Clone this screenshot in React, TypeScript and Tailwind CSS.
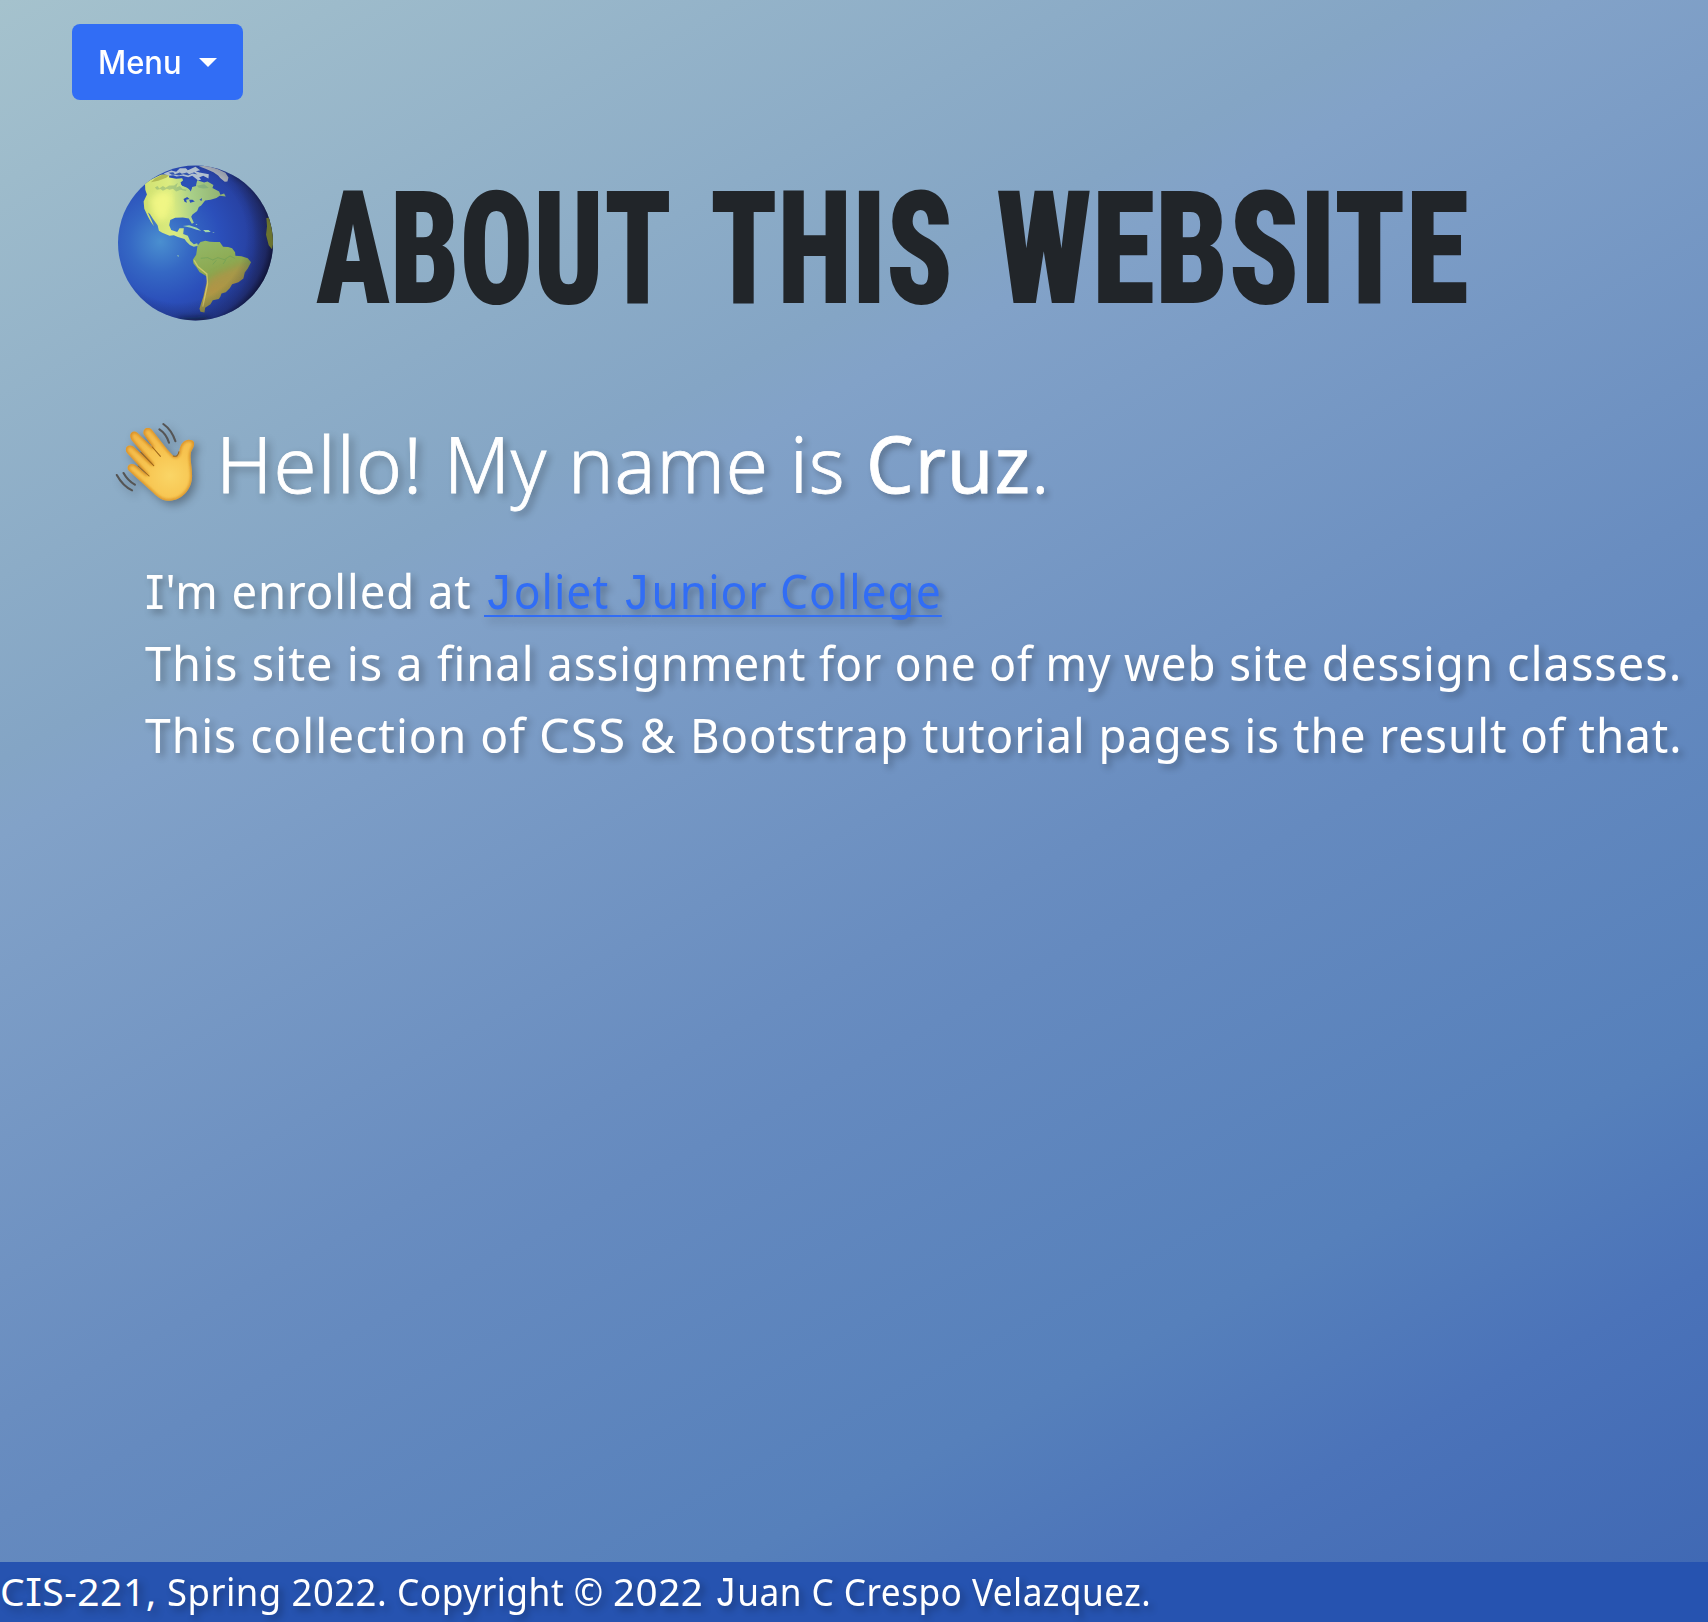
import { useLayoutEffect, useRef, useState, type ReactNode } from "react";

/** Squeezes or stretches one run of text horizontally to a fixed width. */
function Fit({ width, className = "", inner = "", children }: { width: number; className?: string; inner?: string; children: ReactNode }) {
  const ref = useRef<HTMLSpanElement>(null);
  const [scale, setScale] = useState(1);
  useLayoutEffect(() => {
    if (ref.current) setScale(width / ref.current.offsetWidth);
  }, [width]);
  return (
    <span className={`block shrink-0 whitespace-pre ${className}`} style={{ width }}>
      <span ref={ref} className={`inline-block origin-left ${inner}`} style={{ transform: `scaleX(${scale})` }}>
        {children}
      </span>
    </span>
  );
}

/** Capital I with serifs. */
function SerifI() {
  return <span className="font-['Inter'] text-[0.97em] leading-none [font-feature-settings:'cv08'_1,'ss02'_1]">I</span>;
}

/** Capital J with a bar on its left. */
function BarJ() {
  return <span className="font-['Liberation_Mono'] text-[1.08em] leading-none">J</span>;
}

function Globe() {
  return (
    <svg viewBox="50 42 472 474" className="h-[158px] w-[157px] shrink-0" aria-label="globe">
      <defs>
        <radialGradient id="sea" gradientUnits="userSpaceOnUse" cx="180" cy="275" r="330">
          <stop offset="0" stopColor="#4a8fd0" />
          <stop offset="0.28" stopColor="#3568c4" />
          <stop offset="0.55" stopColor="#2b4fba" />
          <stop offset="0.85" stopColor="#2740a0" />
          <stop offset="1" stopColor="#222c66" />
        </radialGradient>
        <linearGradient id="north" x1="0" y1="0.5" x2="1" y2="0.4">
          <stop offset="0" stopColor="#cfe070" />
          <stop offset="0.35" stopColor="#dcec80" />
          <stop offset="0.6" stopColor="#a8cf88" />
          <stop offset="1" stopColor="#8fb070" />
        </linearGradient>
        <linearGradient id="south" x1="0.3" y1="0" x2="0.6" y2="1">
          <stop offset="0" stopColor="#93b765" />
          <stop offset="0.45" stopColor="#8ba64e" />
          <stop offset="0.65" stopColor="#aa9a46" />
          <stop offset="1" stopColor="#a3a446" />
        </linearGradient>
        <radialGradient id="shade" gradientUnits="userSpaceOnUse" cx="235" cy="255" r="290">
          <stop offset="0.7" stopColor="#10153c" stopOpacity="0" />
          <stop offset="0.92" stopColor="#151a48" stopOpacity="0.4" />
          <stop offset="1" stopColor="#0b0f2c" stopOpacity="0.8" />
        </radialGradient>
        <clipPath id="disc"><circle cx="286" cy="279" r="233" /></clipPath>
        <filter id="soft"><feGaussianBlur stdDeviation="9" /></filter>
      </defs>
      <circle cx="286" cy="279" r="233" fill="url(#sea)" />
      <g clipPath="url(#disc)">
        <path fill="url(#north)" d="M134 98L160 84L182 74L206 72L207 82L228 86L246 84L250 93L242 100L247 108L262 111L272 124L277 108L287 108L291 90L312 97L322 94L340 105L337 114L357 124L361 134L372 130L377 139L359 137L349 144L331 149L315 151L303 166L296 171L291 183L277 193L273 200L281 218L275 221L266 205L248 202L225 203L210 210L207 226L213 240L231 246L238 235L251 235L249 252L263 257L270 273L281 283L291 280L294 287L281 290L269 285L259 275L253 267L233 261L221 256L208 257L186 248L176 242L172 226L158 206L149 192L143 187L154 211L161 229L152 216L143 199L132 176L130 154L140 133L135 119Z" />
        <path fill="#f8fb88" filter="url(#soft)" opacity="0.75" d="M150 145L178 125L206 125L216 150L203 200L180 216L158 190Z" />
        <path fill="#9a9d3c" opacity="0.6" d="M165 84L186 73L207 75L198 83L174 92L152 96Z" />
        <path fill="#5c9278" opacity="0.35" d="M164 112L172 108L177 115L188 108L196 113L207 106L222 106L233 98L228 112L239 108L247 117L260 119L256 123L241 119L228 124L218 116L208 119L200 116L188 122L181 117L170 119ZM290 107L312 102L326 114L309 115L296 113Z" />
        <path fill="#2b51b7" d="M252 88L267 88L286 90L288 108L276 111L272 120L259 112L244 105L241 97ZM250 147L261 141L268 147L258 149L260 158L253 155ZM267 149L277 149L284 154L270 158ZM298 149L306 144L304 153Z" />
        <path fill="#b1c0cf" d="M190 70L213 61L228 65L239 54L257 54L263 60L286 50L300 60L287 63L298 67L326 72L325 85L309 77L297 82L303 88L294 91L284 83L276 77L264 81L246 77L229 79L219 75L207 77Z" />
        <path fill="#3658ae" d="M205 68L219 66L224 72L239 67L245 71L260 67L267 72L282 66L292 73L277 70L264 76L249 72L237 76L226 74L215 74Z" />
        <path fill="#b1b8bf" d="M296 48L322 47L354 57L376 68L385 82L382 94L374 95L361 84L354 76L340 66L316 56Z" />
        <path fill="#a1d4aa" d="M248 228L267 226L290 233L303 242L289 239L272 233ZM309 240L325 240L332 246L316 247ZM286 222L292 222L289 225ZM337 246L344 247L339 248ZM230 316L237 317L234 320Z" />
        <path fill="url(#south)" d="M292 287L301 276L316 272L329 275L343 276L359 276L369 290L384 291L396 295L405 307L406 317L424 319L443 325L453 337L443 356L434 368L430 386L415 397L396 403L389 415L377 427L364 431L361 440L356 447L338 451L331 463L315 474L313 488L301 486L298 477L303 460L310 439L316 413L321 393L319 379L298 366L289 352L280 341L278 329L288 314Z" />
        <path fill="#c18a46" opacity="0.4" filter="url(#soft)" d="M350 370L445 330L425 375L370 405L335 440L320 430L325 390Z" />
        <path fill="none" stroke="#e5d475" strokeWidth="4" opacity="0.7" d="M282 331L293 350L320 372L322 402L308 470" />
        <path fill="none" stroke="#5a9958" strokeWidth="2" opacity="0.6" d="M302 325L322 323L338 330L353 323L373 329L390 318L404 325M338 343L349 331M369 342L378 329" />
        <path fill="url(#shade)" d="M53 46H519V512H53Z" />
        <path fill="#6b742f" d="M499 204L510 202L524 260L516 298L506 286L498 254L501 229Z" />
        <path fill="#10121f" filter="url(#soft)" opacity="0.8" d="M400 72L445 92L500 160L520 215L535 140L440 50ZM235 508L330 505L320 525L240 525Z" />
      </g>
    </svg>
  );
}

function WavingHand() {
  return (
    <svg viewBox="40 64 228 240" preserveAspectRatio="none" className="-mt-[3px] h-20 w-[81px] shrink-0 overflow-visible drop-shadow-[4px_4px_4px_rgba(0,0,0,0.3)]" aria-label="waving hand">
      <defs>
        <radialGradient id="skin" gradientUnits="userSpaceOnUse" cx="195" cy="225" r="160">
          <stop offset="0" stopColor="#fad566" />
          <stop offset="0.45" stopColor="#f7c551" />
          <stop offset="1" stopColor="#f3b748" />
        </radialGradient>
        <filter id="palmBlur"><feGaussianBlur stdDeviation="4" /></filter>
        <clipPath id="palm">
          <path d="M84 112C79 98 91 87 103 96L148 143L121 101C116 87 130 75 142 85L186 145L204 166C218 174 221 158 222 145C225 126 241 112 256 119C268 124 262 137 256 149C248 170 257 192 257 226C257 266 228 299 194 300C172 302 158 287 142 271L80 211C68 198 82 184 97 193L132 224L74 157C64 143 75 128 91 137L147 193L87 119Z" />
        </clipPath>
      </defs>
      <g clipPath="url(#palm)">
        <path fill="url(#skin)" d="M40 64H268V304H40Z" />
        <path fill="none" stroke="#c97812" strokeWidth="6" filter="url(#palmBlur)" d="M84 112C79 98 91 87 103 96L148 143L121 101C116 87 130 75 142 85L186 145L204 166C218 174 221 158 222 145C225 126 241 112 256 119C268 124 262 137 256 149C248 170 257 192 257 226C257 266 228 299 194 300C172 302 158 287 142 271L80 211C68 198 82 184 97 193L132 224L74 157C64 143 75 128 91 137L147 193L87 119Z" />
      </g>
      <path fill="none" stroke="#9c6519" strokeWidth="3" strokeLinecap="round" d="M145 139L168 167M113 155L149 195M105 196L136 226M204 166Q217 171 220 153" />
      <path fill="none" stroke="#555555" strokeWidth="6" strokeLinecap="round" d="M165 86Q184 99 192 126M176 70Q200 88 210 122M64 217Q76 240 96 252M45 223Q62 256 88 269" />
    </svg>
  );
}

export default function App() {
  return (
    <div className="flex h-[1622px] w-full flex-col overflow-hidden bg-[linear-gradient(152deg,#a5c2cd_0%,#84a5c5_30%,#82a2c8_33%,#698dc0_56%,#658abf_60%,#5680bb_77%,#4b73b9_86%,#3e67b3_100%)] font-['Noto_Sans',sans-serif] text-white">
      <header className="pt-6 pl-[72px]">
        <button className="flex h-[76px] w-[171px] items-center rounded-lg bg-[#316df5] pl-[26px] font-['Inter',sans-serif] text-[32px] font-[450]">
          <Fit width={84} className="mt-0.5">Menu</Fit>
          <span className="ml-[17px] border-x-[9px] border-t-[9px] border-x-transparent border-t-white" />
        </button>
      </header>

      <main className="grow">
        <h1 className="mt-[64px] ml-[117px] flex h-[158px] items-center font-['Roboto',sans-serif] text-[157px] leading-none font-black text-[#212529] [font-stretch:75%]">
          <Globe />
          <Fit width={356} className="mt-[13px] ml-[42px]">ABOUT</Fit>
          <Fit width={243} className="mt-[13px] ml-[38px]">THIS</Fit>
          <Fit width={473} className="mt-[13px] ml-[43px]">WEBSITE</Fit>
        </h1>

        <h2 className="mt-[91px] ml-[115px] flex h-[100px] items-center text-[78px] leading-[100px] font-light tracking-[1px] [-webkit-text-stroke:0.8px_white] [text-shadow:4px_4px_8px_rgba(0,0,0,0.3)]">
          <WavingHand />
          <Fit width={228} className="ml-[20px]">{"Hello! "}</Fit>
          <Fit width={124}>{"My "}</Fit>
          <Fit width={298}>{"name is "}</Fit>
          <Fit width={184}><span className="font-normal">Cruz</span>.</Fit>
        </h2>

        <div className="mt-[42px] ml-[145px] text-[48px] leading-[72px] tracking-[1px] [text-shadow:4px_4px_8px_rgba(0,0,0,0.3)]">
          <p className="flex">
            <Fit width={339}><SerifI />{"'m enrolled at "}</Fit>
            <a className="text-[#316df5]" href="#">
              <Fit width={458} inner="underline decoration-2 underline-offset-[6px] [text-decoration-skip-ink:none]"><BarJ />oliet <BarJ />unior College</Fit>
            </a>
          </p>
          <p className="flex">
            <Fit width={292}>{"This site is a "}</Fit>
            <Fit width={382}>{"final assignment "}</Fit>
            <Fit width={305}>{"for one of my "}</Fit>
            <Fit width={383}>{"web site dessign "}</Fit>
            <Fit width={175}>classes.</Fit>
          </p>
          <p className="flex">
            <Fit width={394}>{"This collection of "}</Fit>
            <Fit width={151}>{"CSS & "}</Fit>
            <Fit width={232}>{"Bootstrap "}</Fit>
            <Fit width={371}>{"tutorial pages is "}</Fit>
            <Fit width={389}>the result of that.</Fit>
          </p>
        </div>
      </main>

      <footer className="flex h-[60px] bg-[#2653b0] text-[39px] leading-[58px] tracking-[0.5px] [text-shadow:4px_4px_8px_rgba(0,0,0,0.3)]">
        <Fit width={167}>C<SerifI />{"S-221, "}</Fit>
        <Fit width={230}>{"Spring 2022. "}</Fit>
        <Fit width={216}>{"Copyright © "}</Fit>
        <Fit width={101}>{"2022 "}</Fit>
        <Fit width={437}><BarJ />uan C Crespo Velazquez.</Fit>
      </footer>
    </div>
  );
}
